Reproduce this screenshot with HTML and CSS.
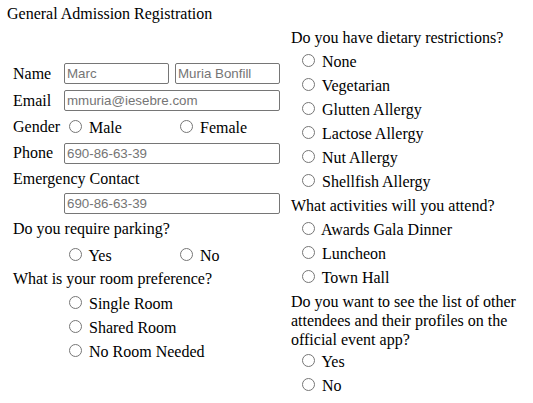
FILE: index.html
```html
<!DOCTYPE html>
<html>
<head>
<meta charset="utf-8">
<link rel="stylesheet" href="styles.css">
</head>
<body>
<div class="title">General Admission Registration</div>
<div class="main">
  <form class="left">
    <div class="lbl">Name</div>
    <div class="cell"><input class="field short" type="text" placeholder="Marc"></div>
    <div class="cell"><input class="field short" type="text" placeholder="Muria Bonfill"></div>

    <div class="lbl">Email</div>
    <div class="cell span2"><input class="field wide" type="text" placeholder="mmuria@iesebre.com"></div>

    <div class="lbl">Gender</div>
    <label class="opt"><input type="radio" name="gender"> Male</label>
    <label class="opt"><input type="radio" name="gender"> Female</label>

    <div class="lbl">Phone</div>
    <div class="cell span2"><input class="field wide" type="text" placeholder="690-86-63-39"></div>

    <div class="lbl span3">Emergency Contact</div>

    <div class="lbl"></div>
    <div class="cell span2"><input class="field wide" type="text" placeholder="690-86-63-39"></div>

    <div class="lbl span3">Do you require parking?</div>

    <div class="lbl"></div>
    <label class="opt"><input type="radio" name="parking"> Yes</label>
    <label class="opt"><input type="radio" name="parking"> No</label>

    <div class="lbl span3">What is your room preference?</div>

    <div class="lbl"></div>
    <label class="opt span2"><input type="radio" name="room"> Single Room</label>
    <div class="lbl"></div>
    <label class="opt span2"><input type="radio" name="room"> Shared Room</label>
    <div class="lbl"></div>
    <label class="opt span2"><input type="radio" name="room"> No Room Needed</label>
  </form>

  <div class="right">
    <div class="q">Do you have dietary restrictions?</div>
    <label class="ropt"><input type="radio" name="diet"> None</label>
    <label class="ropt"><input type="radio" name="diet"> Vegetarian</label>
    <label class="ropt"><input type="radio" name="diet"> Glutten Allergy</label>
    <label class="ropt"><input type="radio" name="diet"> Lactose Allergy</label>
    <label class="ropt"><input type="radio" name="diet"> Nut Allergy</label>
    <label class="ropt"><input type="radio" name="diet"> Shellfish Allergy</label>

    <div class="q">What activities will you attend?</div>
    <label class="ropt"><input type="radio" name="act"> Awards Gala Dinner</label>
    <label class="ropt"><input type="radio" name="act"> Luncheon</label>
    <label class="ropt"><input type="radio" name="act"> Town Hall</label>

    <div class="para">Do you want to see the list of other attendees and their profiles on the official event app?</div>
    <label class="ropt"><input type="radio" name="app"> Yes</label>
    <label class="ropt"><input type="radio" name="app"> No</label>
  </div>
</div>
</body>
</html>
```

FILE: styles.css
```css
html, body {
  margin: 0;
  padding: 0;
  background: #ffffff;
}

body {
  padding: 4px 8px 0 8px;
  font-family: "Liberation Serif", "Times New Roman", serif;
  font-size: 16px;
  color: #000000;
}

.title {
  line-height: 20px;
  height: 20px;
  margin-left: -1px;
}

.main {
  display: flex;
  align-items: flex-start;
  margin-top: 2px;
}

.left {
  width: 283px;
  flex: 0 0 283px;
  box-sizing: border-box;
  padding-left: 5px;
  margin: 34px 0 0 0;
  display: grid;
  grid-template-columns: 51px 111px 1fr;
  grid-template-rows: 27px 27px 26px 26px 25px 25px 26px 25px 24px 24px 24px 24px;
  align-items: center;
}

.lbl {
  line-height: 18px;
  white-space: nowrap;
}

.cell {
  display: flex;
  align-items: center;
}

.span2 {
  grid-column: span 2;
}

.span3 {
  grid-column: span 3;
}

.opt {
  line-height: 18px;
  white-space: nowrap;
}

.field {
  box-sizing: border-box;
  height: 21px;
  margin: 0;
  padding: 1px 2px;
  border: 1px solid #767676;
  border-radius: 2px;
  font-family: "Liberation Sans", Arial, sans-serif;
  font-size: 13.333px;
  background: #ffffff;
}

.field::placeholder {
  color: #757575;
}

.short {
  width: 105px;
}

.wide {
  width: 216px;
}

.right {
  width: 234px;
  flex: 0 0 234px;
}

.q {
  height: 24px;
  line-height: 24px;
  white-space: nowrap;
}

.ropt {
  display: block;
  height: 24px;
  line-height: 24px;
  padding-left: 6px;
  white-space: nowrap;
}

.para {
  padding: 2px 0 1px 0;
  line-height: 19px;
}
```
